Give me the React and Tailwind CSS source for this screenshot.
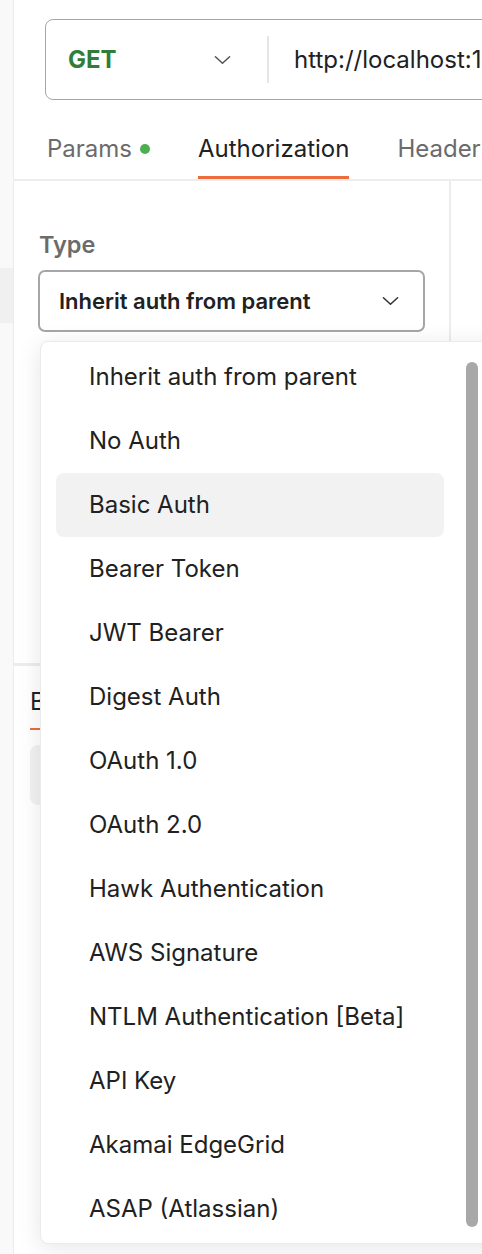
import React from "react";

const items = [
  "Inherit auth from parent",
  "No Auth",
  "Basic Auth",
  "Bearer Token",
  "JWT Bearer",
  "Digest Auth",
  "OAuth 1.0",
  "OAuth 2.0",
  "Hawk Authentication",
  "AWS Signature",
  "NTLM Authentication [Beta]",
  "API Key",
  "Akamai EdgeGrid",
  "ASAP (Atlassian)",
];

function Chevron({ className }) {
  return (
    <svg className={className} viewBox="0 0 18 10" fill="none" stroke="currentColor" strokeWidth="1.6" strokeLinecap="round" strokeLinejoin="round">
      <path d="M1.5 1.5 L9 8.5 L16.5 1.5" />
    </svg>
  );
}

export default function App() {
  return (
    <div
      className="relative w-[482px] h-[1254px] overflow-hidden bg-white flex text-[#212121]"
      style={{ fontFamily: "Inter, 'Noto Sans', sans-serif" }}
    >
      {/* left sidebar strip */}
      <div className="w-[14px] shrink-0 bg-[#f9f9f9] border-r border-[#ececec] flex flex-col">
        <div className="h-[268px]" />
        <div className="h-[55px] bg-[#f0f0f0]" />
      </div>

      {/* main */}
      <div className="flex-1 flex flex-col min-w-0">
        {/* URL bar */}
        <div className="pt-[19px] pl-[31px]">
          <div className="w-[600px] h-[81px] border-[1.5px] border-[#a6a6a6] rounded-[8px] flex items-center">
            <div className="w-[221px] flex items-center pl-[22px] pr-[36px] justify-between">
              <span className="text-[24px] font-bold text-[#307d3b]">GET</span>
              <Chevron className="w-[17px] h-[10px] text-[#555]" />
            </div>
            <div className="w-[2px] h-[47px] bg-[#e6e6e6]" />
            <span className="pl-[25px] text-[24px] text-[#212121] whitespace-nowrap">http://localhost:1</span>
          </div>
        </div>

        {/* tabs */}
        <div className="h-[81px] border-b-2 border-[#ededed] flex items-end pl-[33px] gap-[48px] whitespace-nowrap">
          <div className="h-[78px] flex items-end gap-[8px] text-[24px] leading-[29px] text-[#6b6b6b] pb-[16px]">
            Params
            <span className="w-[10px] h-[10px] rounded-full bg-[#4caf50] mb-[9px]" />
          </div>
          <div className="h-[78px] flex items-end text-[24px] leading-[29px] text-[#212121] border-b-[3px] border-[#ec6c3c] pb-[13px]">
            Authorization
          </div>
          <div className="h-[78px] flex items-end text-[24px] leading-[29px] text-[#6b6b6b] pb-[16px]">
            Headers
          </div>
        </div>

        {/* auth content */}
        <div className="flex h-[482px]">
          <div className="w-[437px] border-r-2 border-[#ededed] pl-[25px] pt-[50px]">
            <div className="text-[23.5px] font-semibold text-[#6b6b6b] leading-[28px]">Type</div>
            <div className="mt-[11px] -ml-[1px] w-[387px] h-[62px] border-2 border-[#a6a6a6] rounded-[7px] flex items-center justify-between pl-[19px] pr-[24px]">
              <span className="text-[22px] font-semibold text-[#212121]">Inherit auth from parent</span>
              <Chevron className="w-[17px] h-[10px] text-[#333]" />
            </div>
          </div>
          <div className="flex-1" />
        </div>

        {/* lower (response) panel */}
        <div className="flex-1 border-t-[3px] border-[#ededed] pl-[16px] pt-[18px]">
          <div className="inline-block text-[24px] text-[#212121] border-b-2 border-[#ec6c3c] pb-[8px]">Body</div>
          <div className="mt-[15px] w-[300px] h-[60px] rounded-[8px] bg-[#f2f2f2]" />
        </div>
      </div>

      {/* dropdown menu */}
      <div className="absolute left-[40px] top-[341px] w-[470px] h-[903px] bg-white border border-[#ebebeb] rounded-[8px] shadow-[0_4px_24px_rgba(0,0,0,0.10)] pt-[3px] px-[15px]">
        {items.map((it, i) => (
          <div
            key={it}
            className={
              "w-[388px] h-[64px] flex items-center pl-[33px] text-[24px] text-[#212121] rounded-[8px] whitespace-nowrap " +
              (i === 2 ? "bg-[#f2f2f2]" : "")
            }
          >
            {it}
          </div>
        ))}
        <div className="absolute left-[425px] top-[20px] w-[12px] h-[865px] rounded-full bg-[#a8a8a8]" />
      </div>
    </div>
  );
}
